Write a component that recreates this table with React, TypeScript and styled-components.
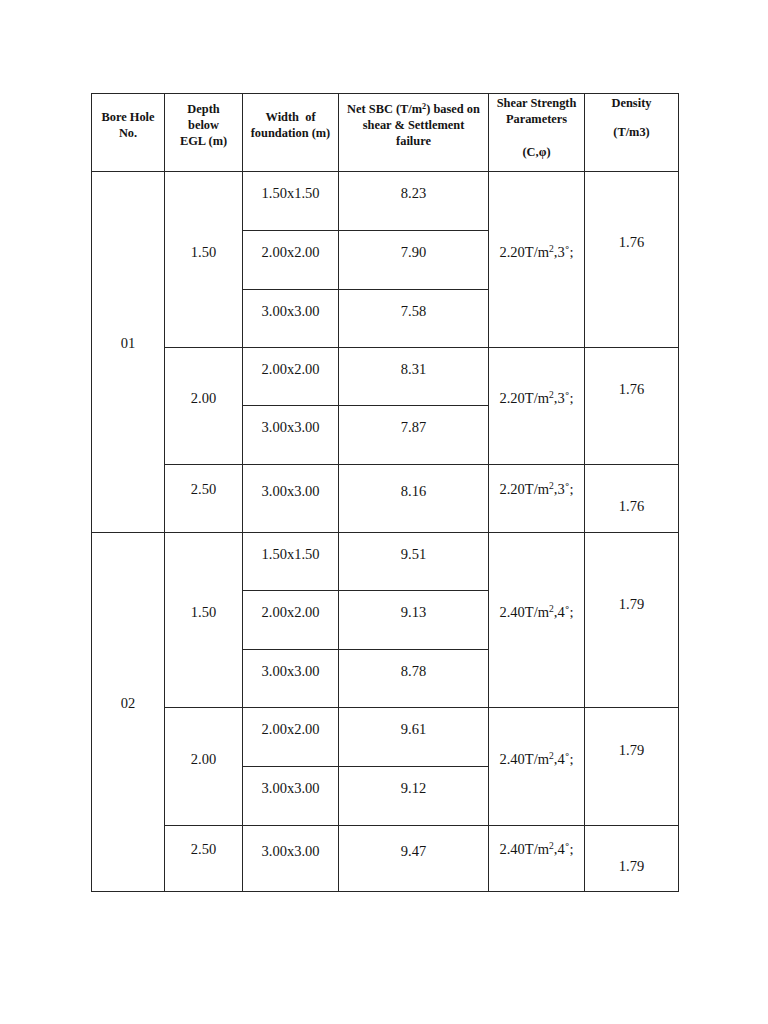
import React from "react";
import styled, { createGlobalStyle } from "styled-components";

const Global = createGlobalStyle`
  html, body { margin: 0; padding: 0; background: #fff; }
  body { font-family: "Liberation Serif", "Times New Roman", serif; color: #161616; }
`;

const Page = styled.div`
  width: 768px;
  min-height: 1024px;
  padding: 93px 0 0 91px;
  box-sizing: border-box;
`;

const Table = styled.table`
  border-collapse: collapse;
  table-layout: fixed;
  width: 587px;
  font-family: "Liberation Serif", "Times New Roman", Times, serif;
  color: #141414;
`;

const HeadCell = styled.th<{ $pb?: number }>`
  border: 1px solid #262626;
  font-family: "Liberation Serif", "Times New Roman", Times, serif;
  font-weight: bold;
  font-size: 12.4px;
  line-height: 16.3px;
  text-align: center;
  vertical-align: middle;
  padding: 0 4px ${(p) => p.$pb ?? 15}px;
  height: 78px;
  box-sizing: border-box;
`;

const Cell = styled.td<{ $pb?: number; $pt?: number }>`
  border: 1px solid #262626;
  font-family: "Liberation Serif", "Times New Roman", Times, serif;
  font-size: 14.5px;
  line-height: 17px;
  text-align: center;
  vertical-align: middle;
  padding: ${(p) => p.$pt ?? 0}px 2px ${(p) => p.$pb ?? 15}px;
  box-sizing: border-box;
  white-space: nowrap;
`;

const Row = styled.tr<{ $h: number }>`
  height: ${(p) => p.$h}px;
`;

const Sup = styled.sup`
  font-size: 0.66em;
  line-height: 0;
  vertical-align: 0.55em;
`;

const Gap = styled.span<{ $h: number }>`
  display: block;
  height: ${(p) => p.$h}px;
`;

type Sub = { w: string; sbc: string; h: number };
type Depth = {
  depth: string;
  subs: Sub[];
  shearPb: number;
  densPb: number;
  densPt: number;
};
type Group = { bore: string; c: string; phi: string; dens: string; depths: Depth[] };

const groups: Group[] = [
  {
    bore: "01",
    c: "2.20",
    phi: "3",
    dens: "1.76",
    depths: [
      {
        depth: "1.50",
        subs: [
          { w: "1.50x1.50", sbc: "8.23", h: 59 },
          { w: "2.00x2.00", sbc: "7.90", h: 59 },
          { w: "3.00x3.00", sbc: "7.58", h: 58 },
        ],
        shearPb: 15,
        densPb: 34,
        densPt: 0,
      },
      {
        depth: "2.00",
        subs: [
          { w: "2.00x2.00", sbc: "8.31", h: 58 },
          { w: "3.00x3.00", sbc: "7.87", h: 59 },
        ],
        shearPb: 15,
        densPb: 33,
        densPt: 0,
      },
      {
        depth: "2.50",
        subs: [{ w: "3.00x3.00", sbc: "8.16", h: 68 }],
        shearPb: 18,
        densPb: 0,
        densPt: 16,
      },
    ],
  },
  {
    bore: "02",
    c: "2.40",
    phi: "4",
    dens: "1.79",
    depths: [
      {
        depth: "1.50",
        subs: [
          { w: "1.50x1.50", sbc: "9.51", h: 58 },
          { w: "2.00x2.00", sbc: "9.13", h: 59 },
          { w: "3.00x3.00", sbc: "8.78", h: 58 },
        ],
        shearPb: 15,
        densPb: 32,
        densPt: 0,
      },
      {
        depth: "2.00",
        subs: [
          { w: "2.00x2.00", sbc: "9.61", h: 59 },
          { w: "3.00x3.00", sbc: "9.12", h: 59 },
        ],
        shearPb: 15,
        densPb: 33,
        densPt: 0,
      },
      {
        depth: "2.50",
        subs: [{ w: "3.00x3.00", sbc: "9.47", h: 66 }],
        shearPb: 18,
        densPb: 0,
        densPt: 16,
      },
    ],
  },
];

const Shear: React.FC<{ c: string; phi: string }> = ({ c, phi }) => (
  <>
    {c}T/m<Sup>2</Sup>,{phi}˚;
  </>
);

export default function App() {
  return (
    <Page>
      <Global />
      <Table>
        <colgroup>
          <col style={{ width: 73 }} />
          <col style={{ width: 78 }} />
          <col style={{ width: 96 }} />
          <col style={{ width: 150 }} />
          <col style={{ width: 96 }} />
          <col style={{ width: 94 }} />
        </colgroup>
        <thead>
          <tr>
            <HeadCell>
              Bore Hole
              <br />
              No.
            </HeadCell>
            <HeadCell>
              Depth
              <br />
              below
              <br />
              EGL (m)
            </HeadCell>
            <HeadCell>
              Width&nbsp; of
              <br />
              foundation (m)
            </HeadCell>
            <HeadCell>
              Net SBC (T/m<Sup>2</Sup>) based on
              <br />
              shear &amp; Settlement
              <br />
              failure
            </HeadCell>
            <HeadCell $pb={10}>
              Shear Strength
              <br />
              Parameters
              <Gap $h={16} />
              (C,φ)
            </HeadCell>
            <HeadCell $pb={30}>
              Density
              <Gap $h={13} />
              (T/m3)
            </HeadCell>
          </tr>
        </thead>
        <tbody>
          {groups.map((g) => {
            const total = g.depths.reduce((n, d) => n + d.subs.length, 0);
            return g.depths.map((d, di) =>
              d.subs.map((s, si) => (
                <Row key={`${g.bore}-${di}-${si}`} $h={s.h}>
                  {di === 0 && si === 0 && (
                    <Cell rowSpan={total} $pb={17}>
                      {g.bore}
                    </Cell>
                  )}
                  {si === 0 && (
                    <Cell rowSpan={d.subs.length} $pb={d.shearPb}>
                      {d.depth}
                    </Cell>
                  )}
                  <Cell>{s.w}</Cell>
                  <Cell>{s.sbc}</Cell>
                  {si === 0 && (
                    <Cell rowSpan={d.subs.length} $pb={d.shearPb}>
                      <Shear c={g.c} phi={g.phi} />
                    </Cell>
                  )}
                  {si === 0 && (
                    <Cell rowSpan={d.subs.length} $pb={d.densPb} $pt={d.densPt}>
                      {g.dens}
                    </Cell>
                  )}
                </Row>
              ))
            );
          })}
        </tbody>
      </Table>
    </Page>
  );
}
